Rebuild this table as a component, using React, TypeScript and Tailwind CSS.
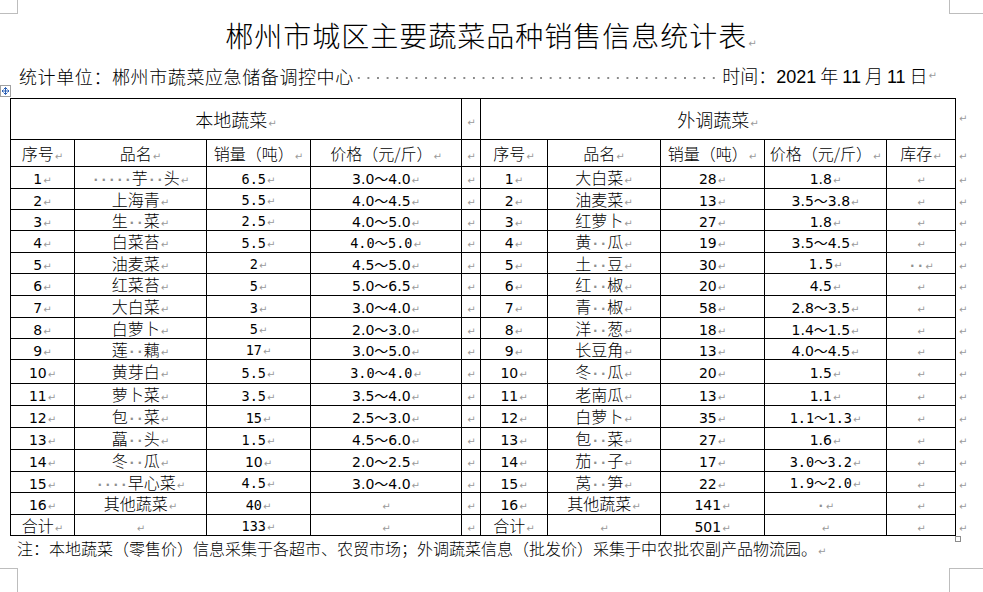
import React from "react";

type Kind = "c" | "n" | "s";

const F: Record<Kind, string> = {
  c: "font-['Noto_Sans_CJK_SC',sans-serif] text-[16px] font-light",
  n: "font-['DejaVu_Sans','Noto_Sans_CJK_SC',sans-serif] text-[14px]",
  s: "font-['DejaVu_Sans_Mono','Noto_Sans_CJK_SC',monospace] text-[13.5px]",
};

const Mark = () => (
  <span className="ml-[1px] text-[10px] leading-none font-normal text-[#9a9a9a] font-['DejaVu_Sans',sans-serif]">
    ↵
  </span>
);

const Dot = () => (
  <span className="inline-block w-[8px] text-center text-[12px] leading-none font-bold text-[#8f8f8f] font-['DejaVu_Sans',sans-serif]">
    ·
  </span>
);

// "·" in the data stands for a visible space mark
const Txt = ({ s, kind }: { s: string; kind: Kind }) => (
  <span className={F[kind]}>
    {s.split(/(·+)/).map((part, i) =>
      part.startsWith("·") ? (
        part.split("").map((_, j) => <Dot key={`${i}-${j}`} />)
      ) : (
        <span key={i}>{part}</span>
      )
    )}
  </span>
);

const Cell = ({ s = "", kind = "c" }: { s?: string; kind?: Kind }) => (
  <td className="border border-black p-0 text-center align-middle leading-none whitespace-nowrap">
    {s && <Txt s={s} kind={kind} />}
    <Mark />
  </td>
);

const EndMark = ({ top }: { top?: boolean }) => (
  <td
    className={`border-0 pl-[2px] text-left leading-none ${
      top ? "align-top pt-[8px]" : "align-middle"
    }`}
  >
    <Mark />
  </td>
);

type Left = [string, string, string, Kind, string, Kind];
type Right = [string, string, string, string, Kind, string?];

const left: Left[] = [
  ["1", "·····芋··头", "6.5", "s", "3.0～4.0", "n"],
  ["2", "上海青", "5.5", "s", "4.0～4.5", "n"],
  ["3", "生··菜", "2.5", "s", "4.0～5.0", "n"],
  ["4", "白菜苔", "5.5", "s", "4.0～5.0", "s"],
  ["5", "油麦菜", "2", "s", "4.5～5.0", "n"],
  ["6", "红菜苔", "5", "s", "5.0～6.5", "n"],
  ["7", "大白菜", "3", "s", "3.0～4.0", "n"],
  ["8", "白萝卜", "5", "s", "2.0～3.0", "n"],
  ["9", "莲··藕", "17", "s", "3.0～5.0", "n"],
  ["10", "黄芽白", "5.5", "s", "3.0～4.0", "s"],
  ["11", "萝卜菜", "3.5", "s", "3.5～4.0", "n"],
  ["12", "包··菜", "15", "s", "2.5～3.0", "n"],
  ["13", "藠··头", "1.5", "s", "4.5～6.0", "n"],
  ["14", "冬··瓜", "10", "n", "2.0～2.5", "n"],
  ["15", "····早心菜", "4.5", "s", "3.0～4.0", "n"],
  ["16", "其他蔬菜", "40", "s", "", "n"],
];

const right: Right[] = [
  ["1", "大白菜", "28", "1.8", "n"],
  ["2", "油麦菜", "13", "3.5～3.8", "n"],
  ["3", "红萝卜", "27", "1.8", "n"],
  ["4", "黄··瓜", "19", "3.5～4.5", "n"],
  ["5", "土··豆", "30", "1.5", "s", "··"],
  ["6", "红··椒", "20", "4.5", "n"],
  ["7", "青··椒", "58", "2.8～3.5", "n"],
  ["8", "洋··葱", "18", "1.4～1.5", "n"],
  ["9", "长豆角", "13", "4.0～4.5", "n"],
  ["10", "冬··瓜", "20", "1.5", "n"],
  ["11", "老南瓜", "13", "1.1", "n"],
  ["12", "白萝卜", "35", "1.1～1.3", "s"],
  ["13", "包··菜", "27", "1.6", "n"],
  ["14", "茄··子", "17", "3.0～3.2", "s"],
  ["15", "莴··笋", "22", "1.9～2.0", "s"],
  ["16", "其他蔬菜", "141", "·", "n"],
];

const rowH = [
  "h-[22px]", "h-[21px]", "h-[21px]", "h-[22px]", "h-[21px]", "h-[22px]",
  "h-[22px]", "h-[21px]", "h-[21px]", "h-[24px]", "h-[22px]", "h-[22px]",
  "h-[22px]", "h-[22px]", "h-[21px]", "h-[22px]",
];

const MoveHandle = () => (
  <svg width="11" height="12" viewBox="0 0 11 12" className="absolute left-[-10px] top-[-13px]">
    <rect x="0.5" y="0.5" width="10" height="11" fill="white" stroke="#a0a0a0" />
    <g stroke="#2b5fb4" strokeWidth="1" fill="none">
      <path d="M5.5 2.5v7M2 6h7" />
      <path d="M4 4l1.5-1.5L7 4M4 8l1.5 1.5L7 8M3.5 4.5L2 6l1.5 1.5M7.5 4.5L9 6l-1.5 1.5" />
    </g>
  </svg>
);

export default function App() {
  return (
    <div className="relative w-[983px] h-[592px] overflow-hidden bg-white text-black font-['Noto_Sans_CJK_SC',sans-serif]">
      {/* page corner marks */}
      <div className="absolute left-0 top-0 w-[18px] h-[14px] border-r border-b border-[#bdbdbd]" />
      <div className="absolute left-[949px] top-0 w-[34px] h-[14px] border-l border-b border-[#bdbdbd]" />
      <div className="absolute left-0 top-[568px] w-[18px] h-[24px] border-r border-t border-[#bdbdbd]" />
      <div className="absolute left-[949px] top-[568px] w-[34px] h-[24px] border-l border-t border-[#bdbdbd]" />

      <div className="flex flex-col">
        <div className="pt-[18px] text-center text-[28px] leading-[34px] tracking-[1px] font-light">
          郴州市城区主要蔬菜品种销售信息统计表
          <Mark />
        </div>

        <div className="mt-[12px] flex items-center pl-[19px] pr-[46px] h-[24px] text-[18px] leading-[24px] font-light">
          <span className="tracking-[0.6px]">统计单位：郴州市蔬菜应急储备调控中心</span>
          <span className="flex-1 h-[24px] bg-[radial-gradient(circle,#8a8a8a_0.8px,transparent_1.2px)] bg-[length:9.6px_6px] bg-repeat-x bg-[position:0_62%]" />
          <span>
            时间：<span className="font-normal font-['Liberation_Sans',sans-serif]">2021</span> 年{" "}
            <span className="font-normal font-['Liberation_Sans',sans-serif]">11</span> 月{" "}
            <span className="font-normal font-['Liberation_Sans',sans-serif]">11</span> 日
          </span>
          <Mark />
        </div>

        <div className="relative ml-[10px] mt-[10px] w-[965px]">
          <MoveHandle />
          <table className="table-fixed border-collapse w-[965px]">
            <colgroup>
              <col className="w-[64px]" />
              <col className="w-[132px]" />
              <col className="w-[104px]" />
              <col className="w-[151px]" />
              <col className="w-[19px]" />
              <col className="w-[67px]" />
              <col className="w-[113px]" />
              <col className="w-[104px]" />
              <col className="w-[122px]" />
              <col className="w-[69px]" />
              <col className="w-[20px]" />
            </colgroup>
            <tbody>
              <tr className="h-[41px]">
                <td colSpan={4} className="border border-black p-0 text-center align-middle text-[18px] leading-none font-light">
                  本地蔬菜
                  <Mark />
                </td>
                <Cell />
                <td colSpan={5} className="border border-black p-0 text-center align-middle text-[18px] leading-none font-light">
                  外调蔬菜
                  <Mark />
                </td>
                <EndMark top />
              </tr>
              <tr className="h-[27px]">
                <Cell s="序号" />
                <Cell s="品名" />
                <Cell s="销量（吨）" />
                <Cell s="价格（元/斤）" />
                <Cell />
                <Cell s="序号" />
                <Cell s="品名" />
                <Cell s="销量（吨）" />
                <Cell s="价格（元/斤）" />
                <Cell s="库存" />
                <EndMark />
              </tr>
              {left.map((l, i) => {
                const r = right[i];
                return (
                  <tr key={i} className={rowH[i]}>
                    <Cell s={l[0]} kind="n" />
                    <Cell s={l[1]} />
                    <Cell s={l[2]} kind={l[3]} />
                    <Cell s={l[4]} kind={l[5]} />
                    <Cell />
                    <Cell s={r[0]} kind="n" />
                    <Cell s={r[1]} />
                    <Cell s={r[2]} kind="n" />
                    <Cell s={r[3]} kind={r[4]} />
                    <Cell s={r[5] ?? ""} />
                    <EndMark />
                  </tr>
                );
              })}
              <tr className="h-[21px]">
                <Cell s="合计" />
                <Cell />
                <Cell s="133" kind="s" />
                <Cell />
                <Cell />
                <Cell s="合计" />
                <Cell />
                <Cell s="501" kind="n" />
                <Cell />
                <Cell />
                <EndMark />
              </tr>
            </tbody>
          </table>
          <div className="absolute left-[945px] bottom-[-6px] w-[6px] h-[6px] border border-[#8c8c8c] bg-white" />
        </div>

        <div className="pl-[17px] text-[16px] leading-[24px] font-light">
          注：本地蔬菜（零售价）信息采集于各超市、农贸市场；外调蔬菜信息（批发价）采集于中农批农副产品物流园。
          <Mark />
        </div>
      </div>
    </div>
  );
}
